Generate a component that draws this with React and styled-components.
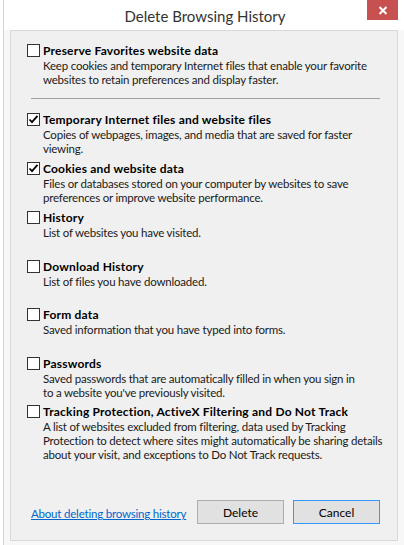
import React from "react";
import styled, { createGlobalStyle } from "styled-components";

const Global = createGlobalStyle`
  html, body { margin: 0; padding: 0; background: #ffffff; }
  * { box-sizing: border-box; }
`;

const Window = styled.div`
  width: 404px;
  height: 545px;
  background: #ffffff;
  padding-left: 3px;
  display: flex;
  font-family: "Segoe UI", Lato, "Noto Sans", sans-serif;
  overflow: hidden;
`;

const Frame = styled.div`
  flex: 1;
  min-width: 0;
  border-left: 1px solid #d4d4d4;
  background: #f7f7f7;
  display: flex;
  flex-direction: column;
  padding: 0 6px 4px 6px;
`;

const TitleBar = styled.div`
  height: 30px;
  position: relative;
  display: flex;
  align-items: center;
  justify-content: center;
  background: #ffffff;
  margin: 0 -6px 0 -6px;
`;

const Title = styled.div`
  font-size: 15px;
  color: #333333;
  padding-left: 2px;
  padding-top: 1px;
  white-space: nowrap;
`;

const CloseBtn = styled.div`
  position: absolute;
  right: 6px;
  top: 0;
  width: 31px;
  height: 20px;
  background: #c75050;
  display: flex;
  align-items: center;
  justify-content: center;
`;

const Panel = styled.div`
  flex: 1;
  min-width: 0;
  background: #f0f0f0;
  border: 1px solid #d9d9d9;
  display: flex;
  flex-direction: column;
  padding: 12px 17px 0 16px;
`;

const Item = styled.div`
  display: grid;
  grid-template-columns: 16px 1fr;
  align-content: start;
  height: ${(p) => p.$h}px;
`;

const Box = styled.div`
  width: 13px;
  height: 13px;
  border: 1px solid #333333;
  background: #ffffff;
  margin-top: 1px;
  display: flex;
  align-items: center;
  justify-content: center;
`;

const Label = styled.div`
  font-size: 12px;
  font-weight: 700;
  letter-spacing: 0.2px;
  color: #000000;
  line-height: 15px;
  white-space: nowrap;
`;

const Desc = styled.div`
  grid-column: 2;
  font-size: 11.5px;
  letter-spacing: -0.2px;
  color: #1a1a1a;
  line-height: 14px;
  padding-top: 1px;
  white-space: nowrap;
`;

const Separator = styled.div`
  height: 1px;
  background: #a0a0a0;
  margin: 0 0 13px 4px;
`;

const Footer = styled.div`
  margin-top: auto;
  margin-bottom: 16px;
  display: flex;
  align-items: center;
  gap: 9px;
`;

const Link = styled.a`
  font-size: 11.5px;
  letter-spacing: -0.2px;
  color: #0066cc;
  text-decoration: underline;
  margin-left: 4px;
  margin-right: auto;
  margin-top: 3px;
  white-space: nowrap;
`;

const Button = styled.div`
  width: 87px;
  height: 24px;
  flex: none;
  background: #e1e1e1;
  border: 1px solid ${(p) => (p.$focus ? "#3399ff" : "#adadad")};
  font-size: 12px;
  color: #000;
  display: flex;
  align-items: center;
  justify-content: center;
`;

const Check = () => (
  <svg width="11" height="11" viewBox="0 0 11 11">
    <path d="M1.5 5.5 L4 8.2 L9.5 1.8" fill="none" stroke="#000" strokeWidth="1.8" />
  </svg>
);

const Entry = ({ checked, label, desc, h }) => (
  <Item $h={h}>
    <Box>{checked && <Check />}</Box>
    <Label>{label}</Label>
    <Desc>
      {desc.map((d, i) => (
        <div key={i}>{d}</div>
      ))}
    </Desc>
  </Item>
);

export default function App() {
  return (
    <>
      <Global />
      <Window>
        <Frame>
          <TitleBar>
            <Title>Delete Browsing History</Title>
            <CloseBtn>
              <svg width="10" height="9" viewBox="0 0 10 9">
                <path d="M1.5 1 L8.5 8 M8.5 1 L1.5 8" stroke="#fff" strokeWidth="2" />
              </svg>
            </CloseBtn>
          </TitleBar>
          <Panel>
            <Entry
              h={55}
              label="Preserve Favorites website data"
              desc={[
                "Keep cookies and temporary Internet files that enable your favorite",
                "websites to retain preferences and display faster.",
              ]}
            />
            <Separator />
            <Entry
              h={49}
              checked
              label="Temporary Internet files and website files"
              desc={["Copies of webpages, images, and media that are saved for faster", "viewing."]}
            />
            <Entry
              h={49}
              checked
              label="Cookies and website data"
              desc={[
                "Files or databases stored on your computer by websites to save",
                "preferences or improve website performance.",
              ]}
            />
            <Entry h={49} label="History" desc={["List of websites you have visited."]} />
            <Entry h={48} label="Download History" desc={["List of files you have downloaded."]} />
            <Entry h={49} label="Form data" desc={["Saved information that you have typed into forms."]} />
            <Entry
              h={48}
              label="Passwords"
              desc={[
                "Saved passwords that are automatically filled in when you sign in",
                "to a website you've previously visited.",
              ]}
            />
            <Entry
              h={60}
              label="Tracking Protection, ActiveX Filtering and Do Not Track"
              desc={[
                "A list of websites excluded from filtering, data used by Tracking",
                "Protection to detect where sites might automatically be sharing details",
                "about your visit, and exceptions to Do Not Track requests.",
              ]}
            />
            <Footer>
              <Link>About deleting browsing history</Link>
              <Button>Delete</Button>
              <Button $focus>Cancel</Button>
            </Footer>
          </Panel>
        </Frame>
      </Window>
    </>
  );
}
